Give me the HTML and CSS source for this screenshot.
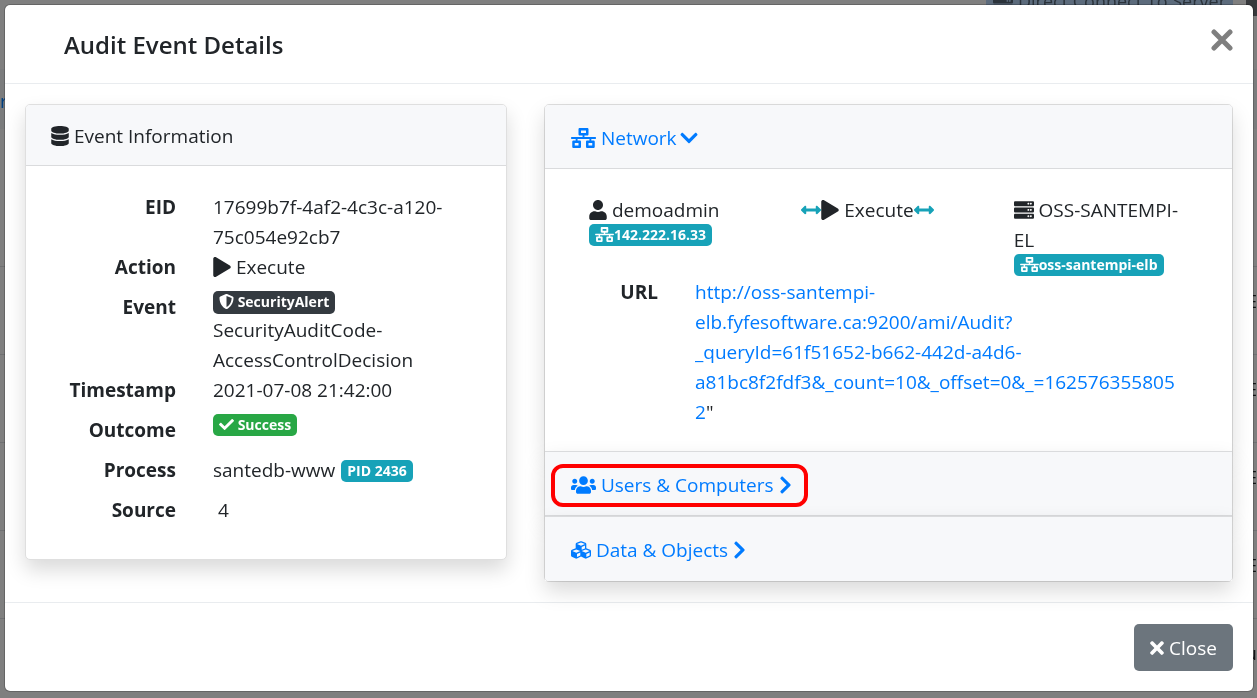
FILE: index.html
```html
<!DOCTYPE html>
<html lang="en">
<head>
<meta charset="utf-8">
<meta name="viewport" content="width=device-width, initial-scale=1">
<title>Audit Event Details</title>
<link rel="stylesheet" href="styles.css">
</head>
<body>
<svg class="sprite" aria-hidden="true">
  <symbol id="database" viewBox="0 0 448 512"><path d="M448 73.143v45.714C448 159.143 347.667 192 224 192S0 159.143 0 118.857V73.143C0 32.857 100.333 0 224 0s224 32.857 224 73.143zM448 176v102.857C448 319.143 347.667 352 224 352S0 319.143 0 278.857V176c48.125 33.143 136.208 48.572 224 48.572S399.874 209.143 448 176zm0 160v102.857C448 479.143 347.667 512 224 512S0 479.143 0 438.857V336c48.125 33.143 136.208 48.572 224 48.572S399.874 369.143 448 336z"/></symbol>
  <symbol id="play" viewBox="0 0 448 512"><path d="M424.4 214.7L72.4 6.6C43.8-10.3 0 6.1 0 47.9V464c0 37.5 40.7 60.1 72.4 41.3l352-208c31.4-18.5 31.5-64.1 0-82.6z"/></symbol>
  <symbol id="user" viewBox="0 0 448 512"><path d="M224 256c70.7 0 128-57.3 128-128S294.7 0 224 0 96 57.3 96 128s57.3 128 128 128zm89.6 32h-16.7c-22.2 10.2-46.9 16-72.9 16s-50.6-5.8-72.9-16h-16.7C60.2 288 0 348.2 0 422.4V464c0 26.5 21.5 48 48 48h352c26.5 0 48-21.5 48-48v-41.6c0-74.2-60.2-134.4-134.4-134.4z"/></symbol>
  <symbol id="check" viewBox="0 0 512 512"><path d="M173.898 439.404l-166.4-166.4c-9.997-9.997-9.997-26.206 0-36.204l36.203-36.204c9.997-9.998 26.207-9.998 36.204 0L192 312.69 432.095 72.596c9.997-9.997 26.207-9.997 36.204 0l36.203 36.204c9.997 9.997 9.997 26.206 0 36.204l-294.4 294.401c-9.998 9.997-26.207 9.997-36.204-.001z"/></symbol>
  <symbol id="times" viewBox="0 0 352 512"><path d="M242.72 256l100.07-100.07c12.28-12.28 12.28-32.19 0-44.48l-22.24-22.24c-12.28-12.28-32.19-12.28-44.48 0L176 189.28 75.93 89.21c-12.28-12.28-32.19-12.28-44.48 0L9.21 111.45c-12.28 12.28-12.28 32.19 0 44.48L109.28 256 9.21 356.07c-12.28 12.28-12.28 32.19 0 44.48l22.24 22.24c12.28 12.28 32.2 12.28 44.48 0L176 322.72l100.07 100.07c12.28 12.28 32.2 12.28 44.48 0l22.24-22.24c12.28-12.28 12.28-32.19 0-44.48L242.72 256z"/></symbol>
  <symbol id="right" viewBox="0 0 320 512"><path d="M285.476 272.971L91.132 467.314c-9.373 9.373-24.569 9.373-33.941 0l-22.667-22.667c-9.357-9.357-9.375-24.522-.04-33.901L188.505 256 34.484 101.255c-9.335-9.379-9.317-24.544.04-33.901l22.667-22.667c9.373-9.373 24.569-9.373 33.941 0L285.475 239.03c9.373 9.372 9.373 24.568.001 33.941z"/></symbol>
  <symbol id="down" viewBox="0 0 448 512"><path d="M207.029 381.476L12.686 187.132c-9.373-9.373-9.373-24.569 0-33.941l22.667-22.667c9.357-9.357 24.522-9.375 33.901-.04L224 284.505l154.745-154.021c9.379-9.335 24.544-9.317 33.901.04l22.667 22.667c9.373 9.373 9.373 24.569 0 33.941L240.971 381.476c-9.373 9.372-24.569 9.372-33.942 0z"/></symbol>
  <symbol id="shield" viewBox="0 0 512 512"><path d="M466.5 83.7l-192-80a48.15 48.15 0 0 0-36.9 0l-192 80C27.7 91.1 16 108.6 16 128c0 198.5 114.5 335.7 221.5 380.3 11.8 4.9 25.1 4.9 36.9 0C360.1 472.6 496 349.3 496 128c0-19.4-11.7-36.9-29.5-44.3zM256.1 446.3l-.1-381 175.9 73.3c-3.3 151.4-82.1 261.1-175.8 307.7z"/></symbol>
  <symbol id="network" viewBox="0 0 640 512"><path d="M640 264v-16c0-8.84-7.16-16-16-16H344v-40h72c17.67 0 32-14.33 32-32V32c0-17.67-14.33-32-32-32H224c-17.67 0-32 14.33-32 32v128c0 17.67 14.33 32 32 32h72v40H16c-8.84 0-16 7.16-16 16v16c0 8.84 7.16 16 16 16h104v40H64c-17.67 0-32 14.33-32 32v128c0 17.67 14.33 32 32 32h160c17.67 0 32-14.33 32-32V352c0-17.67-14.33-32-32-32h-56v-40h304v40h-56c-17.67 0-32 14.33-32 32v128c0 17.67 14.33 32 32 32h160c17.67 0 32-14.33 32-32V352c0-17.67-14.33-32-32-32h-56v-40h104c8.84 0 16-7.16 16-16zM256 128V64h128v64H256zm-64 320H96v-64h96v64zm352 0h-96v-64h96v64z"/></symbol>
  <symbol id="server" viewBox="0 0 512 512"><path id="unit" fill-rule="evenodd" d="M480 160H32c-17.673 0-32-14.327-32-32V64c0-17.673 14.327-32 32-32h448c17.673 0 32 14.327 32 32v64c0 17.673-14.327 32-32 32zm-48-88c-13.255 0-24 10.745-24 24s10.745 24 24 24 24-10.745 24-24-10.745-24-24-24zm-64 0c-13.255 0-24 10.745-24 24s10.745 24 24 24 24-10.745 24-24-10.745-24-24-24z"/><use href="#unit" y="160"/><use href="#unit" y="320"/></symbol>
  <symbol id="arrows" viewBox="0 0 512 512"><path d="M377.941 169.941V216H134.059v-46.059c0-21.382-25.851-32.09-40.971-16.971L7.029 239.029c-9.373 9.373-9.373 24.568 0 33.941l86.059 86.059c15.119 15.119 40.971 4.411 40.971-16.971V296h243.882v46.059c0 21.382 25.851 32.09 40.971 16.971l86.059-86.059c9.373-9.373 9.373-24.568 0-33.941l-86.059-86.059c-15.119-15.12-40.971-4.412-40.971 16.97z"/></symbol>
  <symbol id="users" viewBox="0 0 640 512"><path d="M96 224c35.3 0 64-28.7 64-64s-28.7-64-64-64-64 28.7-64 64 28.7 64 64 64zm448 0c35.3 0 64-28.7 64-64s-28.7-64-64-64-64 28.7-64 64 28.7 64 64 64zm32 32h-64c-17.6 0-33.5 7.1-45.1 18.6 40.3 22.1 68.9 62 75.1 109.4h66c17.7 0 32-14.3 32-32v-32c0-35.3-28.7-64-64-64zm-256 0c61.9 0 112-50.1 112-112S381.9 32 320 32 208 82.1 208 144s50.1 112 112 112zm76.8 32h-8.3c-20.8 10-43.9 16-68.5 16s-47.6-6-68.5-16h-8.3C179.6 288 128 339.6 128 403.2V432c0 26.5 21.5 48 48 48h288c26.5 0 48-21.5 48-48v-28.8c0-63.6-51.6-115.2-115.2-115.2zm-223.7-13.4C161.5 263.1 145.6 256 128 256H64c-35.3 0-64 28.7-64 64v32c0 17.7 14.3 32 32 32h65.9c6.3-47.4 34.9-87.3 75.2-109.4z"/></symbol>
  <symbol id="cubes" viewBox="0 0 512 512"><path d="M488.6 250.2L392 214V105.5c0-15-9.3-28.4-23.4-33.7l-100-37.5c-8.1-3.1-17.1-3.1-25.3 0l-100 37.5c-14.1 5.3-23.4 18.7-23.4 33.7V214l-96.6 36.2C9.3 255.5 0 268.9 0 283.9V394c0 13.6 7.7 26.1 19.9 32.2l100 50c10.1 5.1 22.1 5.1 32.2 0l103.9-52 103.9 52c10.1 5.1 22.1 5.1 32.2 0l100-50c12.2-6.1 19.9-18.6 19.9-32.2V283.9c0-15-9.3-28.4-23.4-33.7zM358 214.8l-85 31.9v-68.2l85-37v73.3zM154 104.1l102-38.2 102 38.2v.6l-102 41.4-102-41.4v-.6zm84 291.1l-85 42.5v-79.1l85-38.8v75.4zm0-112l-102 41.4-102-41.4v-.6l102-38.2 102 38.2v.6zm240 112l-85 42.5v-79.1l85-38.8v75.4zm0-112l-102 41.4-102-41.4v-.6l102-38.2 102 38.2v.6z"/></symbol>
</svg>

<div class="page" aria-hidden="true">
  <div class="toolbar"><span class="connect"><svg class="icon icon-20"><use href="#server"/></svg> Direct Connect To Server</span><span class="tool-end"></span></div>
  <div class="crumb">r</div>
  <div class="edge"><span>E</span><span>E</span><span>E</span><span>E</span><span>u</span></div>
</div>

<div class="modal" role="dialog" aria-labelledby="title">
  <header class="modal-header">
    <h1 class="modal-title" id="title">Audit Event Details</h1>
    <button class="dismiss" type="button" aria-label="Dismiss"><svg viewBox="0 0 22 22"><path d="M3 3l16 16M19 3L3 19"/></svg></button>
  </header>

  <main class="modal-body">
    <section class="card">
      <h2 class="card-header"><svg class="icon icon-18"><use href="#database"/></svg> Event Information</h2>
      <dl class="facts">
        <dt>EID</dt><dd>17699b7f-4af2-4c3c-a120-75c054e92cb7</dd>
        <dt class="tall">Action</dt><dd><svg class="icon icon-18"><use href="#play"/></svg> Execute</dd>
        <dt>Event</dt><dd><span class="badge dark"><svg class="icon icon-badge"><use href="#shield"/></svg> SecurityAlert</span><div>SecurityAuditCode-AccessControlDecision</div></dd>
        <dt class="tall">Timestamp</dt><dd>2021-07-08 21:42:00</dd>
        <dt class="tall">Outcome</dt><dd><span class="badge green"><svg class="icon icon-badge"><use href="#check"/></svg> Success</span></dd>
        <dt class="tall">Process</dt><dd class="process">santedb-www <span class="badge teal">PID 2436</span></dd>
        <dt class="tall">Source</dt><dd>&nbsp;4</dd>
      </dl>
    </section>

    <div class="accordion">
      <section class="panel">
        <h2 class="panel-header"><button class="toggle" type="button" aria-expanded="true"><svg class="icon icon-25"><use href="#network"/></svg> Network<svg class="icon icon-18 caret-down"><use href="#down"/></svg></button></h2>
        <div class="panel-body">
          <div class="flow">
            <div><svg class="icon icon-18"><use href="#user"/></svg> demoadmin<span class="badge teal"><svg class="icon icon-net"><use href="#network"/></svg>142.222.16.33</span></div>
            <div class="verb"><svg class="icon icon-20 cyan"><use href="#arrows"/></svg><svg class="icon icon-18"><use href="#play"/></svg> Execute<svg class="icon icon-20 cyan"><use href="#arrows"/></svg></div>
            <div><svg class="icon icon-20"><use href="#server"/></svg> OSS-SANTEMPI-EL<span class="badge teal"><svg class="icon icon-net"><use href="#network"/></svg>oss-santempi-elb</span></div>
          </div>
          <dl class="url">
            <dt>URL</dt>
            <dd><a href="#url">http://oss-santempi-elb.fyfesoftware.ca:9200/ami/Audit?<br>_queryId=61f51652-b662-442d-a4d6-a81bc8f2fdf3&amp;_count=10&amp;_offset=0&amp;_=1625763558052</a>"</dd>
          </dl>
        </div>
      </section>
      <section class="panel">
        <h2 class="panel-header"><button class="toggle marked" type="button" aria-expanded="false"><svg class="icon icon-25"><use href="#users"/></svg> Users &amp; Computers <svg class="icon icon-13"><use href="#right"/></svg></button></h2>
      </section>
      <section class="panel">
        <h2 class="panel-header last"><button class="toggle" type="button" aria-expanded="false"><svg class="icon icon-20"><use href="#cubes"/></svg> Data &amp; Objects <svg class="icon icon-13"><use href="#right"/></svg></button></h2>
      </section>
    </div>
  </main>

  <footer class="modal-footer">
    <button class="close" type="button"><svg class="icon icon-14"><use href="#times"/></svg> Close</button>
  </footer>
</div>
</body>
</html>
```
FILE: styles.css
```css
* { box-sizing: border-box; }

body {
  margin: 0;
  padding: 4px 3px 6px 4px;
  min-height: 100vh;
  background: #7f7f7f;
  color: #212529;
  font: 19px/30px "Segoe UI", "Open Sans", "Noto Sans", sans-serif;
}

h1, h2, dl, dd { margin: 0; }
button { font: inherit; cursor: pointer; }
.sprite { display: none; }

.icon { height: 20px; fill: currentColor; vertical-align: -3px; }
.icon-25 { width: 25px; }
.icon-20 { width: 20px; }
.icon-18 { width: 18px; }
.icon-14 { width: 14px; }
.icon-13 { width: 13px; }
.icon-badge { width: 15px; height: 15px; vertical-align: -2px; }
.icon-net { width: 19px; height: 15px; vertical-align: -2px; }

/* Dimmed page behind the dialog */
.page { position: fixed; inset: 0; z-index: -1; overflow: hidden; color: #111315; }
.toolbar { display: flex; justify-content: flex-end; gap: 13px; height: 69px; margin-top: -14px; }
.connect { height: 30px; padding: 0 7px; background: #5c6b7c; color: #2b333b; font-size: 18px; white-space: nowrap; }
.tool-end { width: 11px; height: 30px; background: #37393c; }
.crumb { height: 60px; margin-top: 14px; padding-top: 17px; background: #7b7c7d; color: #003f80; line-height: 30px; }
.edge { display: flex; flex-direction: column; align-items: flex-end; margin-top: 137px; }
.edge span { width: 100%; height: 88px; padding: 19px 0 0; border-top: 1px solid #6f7072; text-align: right; }

.modal {
  background: #fff;
  background-clip: padding-box;
  border: 1px solid rgba(0, 0, 0, .2);
  border-radius: 6px;
}

.modal-header {
  display: flex;
  align-items: center;
  justify-content: space-between;
  min-height: 79px;
  padding: 0 20px 0 59px;
  border-bottom: 1px solid #e9ecef;
}
.modal-title { padding-top: 2px; font-size: 24px; line-height: 38px; font-weight: 600; }
.dismiss { display: flex; margin-bottom: 8px; padding: 0; border: 0; background: none; }
.dismiss svg { width: 22px; height: 22px; fill: none; stroke: #7f7f7f; stroke-width: 5; stroke-linecap: round; }

.modal-body {
  display: grid;
  grid-template-columns: 482fr 689fr;
  align-items: start;
  gap: 37px;
  padding: 20px;
}

.card, .panel { box-shadow: 0 10px 20px rgba(0, 0, 0, .15); }
.card { border: 1px solid #dfdfdf; border-radius: 5px; background: #fff; }
.card-header, .panel-header {
  background: #f7f8fa;
  border-bottom: 1px solid #dadbdd;
  font-size: 19px;
  font-weight: 400;
}
.card-header { padding: 16px 25px 14px; border-radius: 4px 4px 0 0; line-height: 30px; }

.facts {
  display: grid;
  grid-template-columns: 125fr 268fr;
  column-gap: 37px;
  padding: 26px 25px 24px;
}
.facts dt, .url dt { font-weight: 700; text-align: right; }
.facts .tall { min-height: 40px; }
.facts dd { min-width: 0; overflow-wrap: anywhere; }

.badge {
  display: block;
  width: fit-content;
  height: 22px;
  padding: 0 6px;
  border-radius: 5px;
  color: #fff;
  font-size: 14px;
  font-weight: 700;
  line-height: 22px;
  white-space: nowrap;
}
.facts .badge { margin-top: -1px; }
.facts .dark { height: 23px; margin-bottom: 1px; background: #343a40; }
.green { background: #28a745; }
.teal { background: #17a2b8; }
.process { display: flex; gap: 6px; }
.process .teal.badge { margin-top: 5px; }

.accordion { min-width: 0; border: 1px solid #dfdfdf; border-radius: 5px; }
.panel { position: relative; }
.panel-header { display: flex; align-items: center; height: 64px; padding: 3px 6px 0; }
.panel:first-child .panel-header { border-radius: 4px 4px 0 0; }
.panel + .panel { border-top: 1px solid #dadbdd; }
.panel-header.last { border-bottom: 0; border-radius: 0 0 4px 4px; }
.toggle {
  padding: 2px 12px 3px 16px;
  border: 4px solid transparent;
  border-radius: 12px;
  background: none;
  color: #007bff;
  line-height: 30px;
  white-space: nowrap;
}
.marked { border-color: #f00; }
.caret-down { margin-left: 3px; }

.panel-body { padding: 26px 43px 24px 44px; background: #fff; }
.flow { display: grid; grid-template-columns: repeat(3, 1fr); column-gap: 37px; }
.flow > div { min-width: 0; }
.flow .badge { margin: -1px 0 1px; }
.verb { white-space: nowrap; }
.cyan { color: #17a2b8; }
.url { display: grid; grid-template-columns: 69fr 494fr; column-gap: 37px; }
.url dd { min-width: 0; padding-right: 6px; overflow-wrap: anywhere; }
.url a { color: #007bff; text-decoration: none; }

.modal-footer {
  display: flex;
  justify-content: flex-end;
  padding: 21px 20px 20px;
  border-top: 1px solid #e9ecef;
}
.close {
  height: 47px;
  padding: 0 16px;
  border: 0;
  border-radius: 5px;
  background: #6c757d;
  color: #fff;
  white-space: nowrap;
}
```
